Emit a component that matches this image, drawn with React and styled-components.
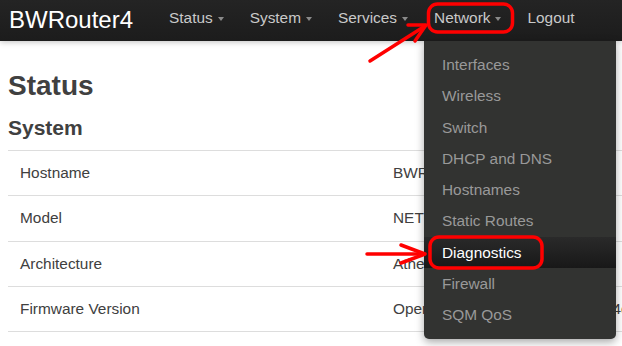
import React from 'react';
import styled, { createGlobalStyle } from 'styled-components';

const GlobalStyle = createGlobalStyle`
  html, body {
    margin: 0;
    padding: 0;
    background: #fff;
    font-family: "Liberation Sans", Arial, sans-serif;
    overflow: hidden;
  }
`;

const Page = styled.div`
  position: relative;
  width: 622px;
  height: 346px;
  overflow: hidden;
`;

const Navbar = styled.div`
  display: flex;
  align-items: center;
  height: 41px;
  background: linear-gradient(#242424, #1c1c1c);
  box-shadow: 0 1px 6px rgba(0, 0, 0, 0.25);
`;

const Brand = styled.div`
  color: #fff;
  font-size: 24px;
  padding: 0 23px 0 9px;
  margin-top: -2px;
`;

const NavList = styled.div`
  display: flex;
  align-items: center;
`;

const NavItem = styled.div`
  display: flex;
  align-items: center;
  color: #c9c9c9;
  font-size: 15.4px;
  padding: 0 13px;
  margin-top: -5px;
`;

const Caret = styled.span`
  display: inline-block;
  margin-left: 5px;
  margin-top: 2px;
  border-top: 4px solid #8a8a8a;
  border-left: 3.5px solid transparent;
  border-right: 3.5px solid transparent;
`;

const Content = styled.div`
  padding: 0 0 0 8px;
`;

const Title = styled.h2`
  margin: 0;
  padding-top: 29px;
  font-size: 28px;
  font-weight: bold;
  color: #404040;
  line-height: 32px;
`;

const Section = styled.h3`
  margin: 0;
  padding-top: 12px;
  font-size: 21px;
  font-weight: bold;
  color: #404040;
  line-height: 28px;
  padding-bottom: 8px;
`;

const Table = styled.div`
  width: 700px;
  border-top: 1px solid #ddd;
`;

const Row = styled.div`
  display: flex;
  align-items: center;
  height: 44.3px;
  border-bottom: 1px solid #ddd;
  font-size: 15.4px;
  color: #404040;
`;

const Label = styled.div`
  flex: 0 0 373px;
  padding-left: 12px;
  box-sizing: border-box;
`;

const Value = styled.div`
  padding-left: 12px;
  white-space: nowrap;
`;

const Dropdown = styled.div`
  position: absolute;
  top: 41px;
  left: 424px;
  width: 192px;
  padding: 8px 0 8px;
  background: #323331;
  border-radius: 0 0 5px 5px;
  box-shadow: 0 3px 8px rgba(0, 0, 0, 0.35);
`;

const MenuItem = styled.div`
  height: 31.3px;
  line-height: 31.3px;
  padding-left: 18px;
  font-size: 15.4px;
  color: ${(p) => (p.active ? '#fff' : '#999')};
  background: ${(p) => (p.active ? 'linear-gradient(#2a2a2a, #181818)' : 'transparent')};
`;

const Annotations = styled.svg`
  position: absolute;
  top: 0;
  left: 0;
  pointer-events: none;
`;

const navItems = ['Status', 'System', 'Services', 'Network'];

const rows = [
  ['Hostname', 'BWRouter4'],
  ['Model', 'NETGEAR WNDR3800'],
  ['Architecture', 'Atheros AR7161 rev 2'],
  ['Firmware Version', 'OpenWrt Chaos Calmer 15.05 / 4c2d3 LuCI'],
];

const menu = [
  'Interfaces',
  'Wireless',
  'Switch',
  'DHCP and DNS',
  'Hostnames',
  'Static Routes',
  'Diagnostics',
  'Firewall',
  'SQM QoS',
];

export default function App() {
  return (
    <>
      <GlobalStyle />
      <Page>
        <Navbar>
          <Brand>BWRouter4</Brand>
          <NavList>
            {navItems.map((n) => (
              <NavItem key={n}>
                {n}
                <Caret />
              </NavItem>
            ))}
            <NavItem>Logout</NavItem>
          </NavList>
        </Navbar>
        <Content>
          <Title>Status</Title>
          <Section>System</Section>
          <Table>
            {rows.map(([k, v]) => (
              <Row key={k}>
                <Label>{k}</Label>
                <Value>{v}</Value>
              </Row>
            ))}
          </Table>
        </Content>
        <Dropdown>
          {menu.map((m) => (
            <MenuItem key={m} active={m === 'Diagnostics'}>
              {m}
            </MenuItem>
          ))}
        </Dropdown>
        <Annotations width="622" height="346" viewBox="0 0 622 346">
          <g fill="none" stroke="#f00" strokeWidth="3.5" strokeLinecap="round" strokeLinejoin="round">
            <rect x="428.5" y="4" width="84" height="28" rx="9" />
            <line x1="370" y1="61" x2="425" y2="26" />
            <polyline points="408,25 426,25 415,41" />
            <rect x="430" y="237" width="112" height="31" rx="9" />
            <line x1="367" y1="254" x2="424" y2="254" />
            <polyline points="401,245 425,254 401,263" />
          </g>
        </Annotations>
      </Page>
    </>
  );
}
